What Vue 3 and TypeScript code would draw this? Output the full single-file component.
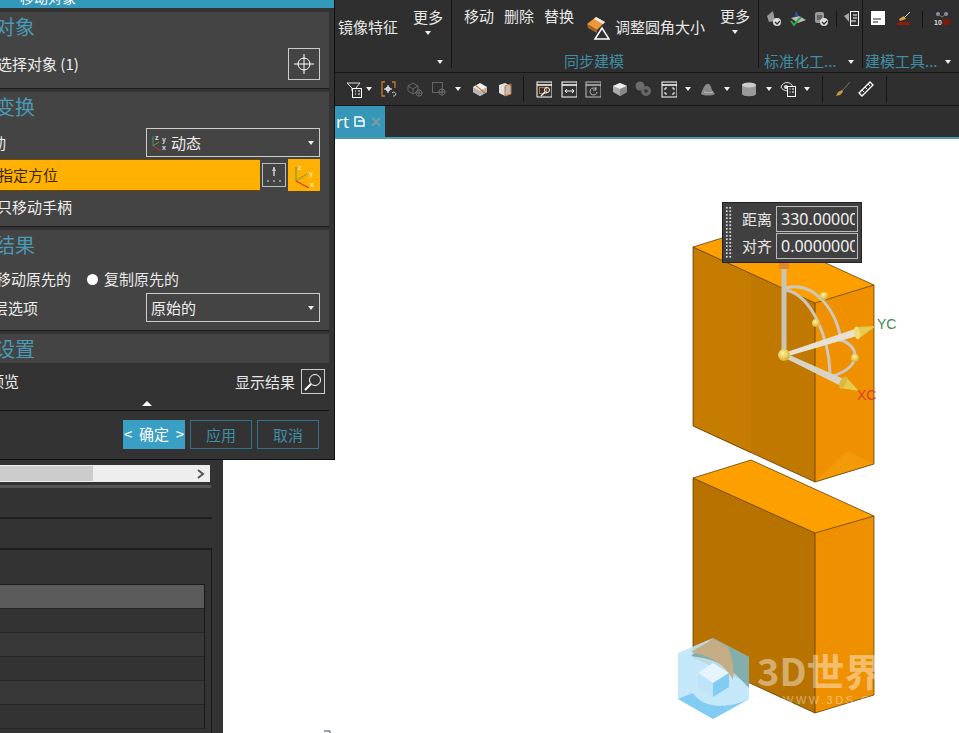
<script setup lang="ts">
// icon bodies for the 16x16 toolbar slots
const shapes: Record<string, string> = {
  filter: '<path d="M1 2h13l-4 5v3H6V7z" fill="none" stroke="#ddd"/><rect x="6.500" y="7.500" width="9" height="9" fill="#333" stroke="#fff"/><path d="M9 10h1M12 10h2M9 13h1M12 13h2" stroke="#fff"/>',
  bracket: '<path d="M4 1H1v14h3M11 1h3v6" fill="none" stroke="#c87a2a" stroke-width="1.300"/><path d="M7 4v8M3 8h8" stroke="#fff"/><circle cx="7" cy="8" r="2" fill="none" stroke="#fff"/><path d="M11 12a2 2 0 1 1 1 3" fill="none" stroke="#ccc"/>',
  ghostBox: '<path d="M1 5l5-3 5 3v5l-5 3-5-3zM1 5l5 3 5-3M6 8v5" fill="none" stroke="#666"/><circle cx="12" cy="12" r="3" fill="none" stroke="#666"/><path d="M12 8v8M8 12h8" stroke="#666"/>',
  ghostSq: '<rect x="1.500" y="1.500" width="10" height="10" fill="none" stroke="#666"/><circle cx="11" cy="11" r="3" fill="none" stroke="#666"/><path d="M11 7v8M7 11h8" stroke="#666"/>',
  cutBox: '<path d="M8 2l7 4v5l-7 4-7-4V6z" fill="#f2f2f2"/><path d="M1 6l7 4 7-4v5l-7 4-7-4z" fill="#b5b5b5"/><path d="M3 4l10 8" stroke="#c8752a" stroke-width="1.200"/>',
  sideBox: '<path d="M2 4l6-2 6 3v8l-6 2-6-3z" fill="#e0e0e0"/><path d="M8 5v10l6-2V5z" fill="#bbb"/><path d="M8 5l6-2v10l-6 2z" fill="none" stroke="#c8752a"/>',
  winZoom: '<rect x="1" y="1" width="15" height="15" fill="#333" stroke="#fff"/><path d="M1 4h15" stroke="#fff" stroke-width="1.500"/><rect x="3.500" y="6.500" width="7" height="6" fill="none" stroke="#c8752a"/><circle cx="11" cy="9" r="2.500" fill="none" stroke="#fff"/><path d="M9 11l-4 4" stroke="#fff" stroke-width="1.500"/>',
  winFit: '<rect x="1" y="1" width="15" height="15" fill="#333" stroke="#fff"/><path d="M1 4h15" stroke="#fff" stroke-width="1.500"/><path d="M4 10h9M4 10l2-2M4 10l2 2M13 10l-2-2M13 10l-2 2" fill="none" stroke="#fff"/>',
  winRot: '<rect x="1" y="1" width="15" height="15" fill="#333" stroke="#bbb"/><path d="M1 4h15" stroke="#bbb" stroke-width="1.500"/><path d="M11 8a3.500 3.500 0 1 0 1 3M11 6v3h-3" fill="none" stroke="#bbb"/>',
  shade: '<path d="M8 2l7 3v6l-7 4-7-4V5z" fill="#aaa"/><path d="M1 5l7-3 7 3-7 3z" fill="#eee"/><path d="M8 8l7-3v6l-7 4z" fill="#888"/>',
  gears: '<circle cx="5" cy="5" r="4.500" fill="#6c6c6c"/><circle cx="11" cy="10" r="5" fill="#666"/><circle cx="11" cy="10" r="1.800" fill="#333"/>',
  winCorner: '<rect x="1" y="1" width="15" height="15" fill="#333" stroke="#fff"/><path d="M1 4h15" stroke="#fff" stroke-width="1.500"/><path d="M4 9V7h2M11 7h2v2M4 11v2h2M11 13h2v-2" fill="none" stroke="#fff"/>',
  hat: '<path d="M1 13c1-3 3-9 6-10s4 3 5 6l3 4c-4 2-10 2-14 0z" fill="#8a8a8a"/><path d="M4 11c3 1 6 1 9 0" fill="none" stroke="#bbb"/>',
  cylinder: '<path d="M1 4v9c0 3 14 3 14 0V4z" fill="#999"/><ellipse cx="8" cy="4" rx="7" ry="2.500" fill="#ccc"/>',
  eyeList: '<path d="M1 6c2-6 10-6 12 0-2 5-10 5-12 0z" fill="none" stroke="#ddd"/><circle cx="6" cy="6" r="2" fill="#ddd"/><rect x="7.500" y="5.500" width="8" height="10" fill="#333" stroke="#fff"/><path d="M9.500 8h1M12 8h2M9.500 11h1M12 11h2" stroke="#fff"/>',
  broom: '<path d="M15 1L7 10" stroke="#777"/><path d="M7 9l-4 2-2 4 4-1 3-3z" fill="#c79a3c"/>',
  ruler: '<path d="M1 12L12 1l3 3L4 15z" fill="none" stroke="#fff" stroke-width="1.300"/><path d="M4 9l2 2M7 6l2 2M10 3l2 2" stroke="#fff"/>'
}

type ToolItem = { kind: 'icon' | 'caret' | 'sep'; name?: string; gap: number }

// gap = distance in px from the previous item
const toolItems: ToolItem[] = [
  { kind: 'icon', name: 'filter', gap: 11 },
  { kind: 'caret', gap: 4 },
  { kind: 'icon', name: 'bracket', gap: 9 },
  { kind: 'icon', name: 'ghostBox', gap: 10 },
  { kind: 'icon', name: 'ghostSq', gap: 8 },
  { kind: 'caret', gap: 8 },
  { kind: 'icon', name: 'cutBox', gap: 11 },
  { kind: 'icon', name: 'sideBox', gap: 9 },
  { kind: 'sep', gap: 10 },
  { kind: 'icon', name: 'winZoom', gap: 12 },
  { kind: 'icon', name: 'winFit', gap: 9 },
  { kind: 'icon', name: 'winRot', gap: 8 },
  { kind: 'icon', name: 'shade', gap: 11 },
  { kind: 'icon', name: 'gears', gap: 7 },
  { kind: 'icon', name: 'winCorner', gap: 10 },
  { kind: 'caret', gap: 8 },
  { kind: 'icon', name: 'hat', gap: 9 },
  { kind: 'caret', gap: 8 },
  { kind: 'icon', name: 'cylinder', gap: 11 },
  { kind: 'caret', gap: 9 },
  { kind: 'icon', name: 'eyeList', gap: 8 },
  { kind: 'caret', gap: 8 },
  { kind: 'sep', gap: 12 },
  { kind: 'icon', name: 'broom', gap: 12 },
  { kind: 'icon', name: 'ruler', gap: 7 },
  { kind: 'sep', gap: 12 }
]

const tableRows = [0, 1, 2, 3, 4]
</script>

<template>
  <div class="page">
    <!-- 功能区 -->
    <header class="ribbon">
      <section class="group g-mirror">
        <span class="cmd mirror">镜像特征</span>
        <div class="more"><span>更多</span><i class="caret"></i></div>
        <i class="caret group-caret"></i>
      </section>
      <section class="group g-sync">
        <div class="sync-small">
          <span>移动</span><span>删除</span><span>替换</span>
        </div>
        <svg class="eraser" width="24" height="26" viewBox="0 0 24 26">
          <path d="M1 9l9-7 9 5-8 8z" fill="#f0973a" />
          <path d="M10 2l9 5-2 2-9-5z" fill="#eee" />
          <path d="M1 9l10 6v3L2 13z" fill="#a8652a" />
          <path d="M16 13l7 11H9z" fill="#333" stroke="#fff" stroke-width="1.500" />
        </svg>
        <span class="cmd fillet">调整圆角大小</span>
        <div class="more more-2"><span>更多</span><i class="caret"></i></div>
        <span class="group-label sync-label">同步建模</span>
      </section>
      <section class="group g-std">
        <div class="icon-row">
          <svg width="16" height="17" viewBox="0 0 16 17"><path d="M1 6l6-5 2 10-6 1z" fill="#999" /><circle cx="11" cy="12" r="4" fill="#ddd" /><path d="M9 12l2 2 3-3" fill="none" stroke="#333" stroke-width="1.300" /></svg>
          <svg width="18" height="17" viewBox="0 0 18 17"><path d="M2 8l8-2 7 4-8 3z" fill="#bbb" /><path d="M7 1l3 5-5 1z" fill="#2d4f9e" /><path d="M2 11l3 4 7-8" fill="none" stroke="#2fa84a" stroke-width="2" /></svg>
          <svg width="15" height="17" viewBox="0 0 15 17"><rect x="1" y="2" width="9" height="11" rx="2" fill="#999" /><rect x="3" y="5" width="5" height="5" fill="#666" /><circle cx="10" cy="12" r="4" fill="#ddd" /><path d="M8 12l2 2 3-3" fill="none" stroke="#333" stroke-width="1.300" /></svg>
          <i class="mini-sep"></i>
          <svg width="16" height="17" viewBox="0 0 16 17"><path d="M0 6l5-3v9z" fill="#aaa" /><rect x="6.500" y="1.500" width="8" height="14" fill="#333" stroke="#fff" /><path d="M9 5h4M9 8h4M7 11h5" stroke="#fff" /></svg>
        </div>
        <span class="group-label std-label">标准化工...</span>
        <i class="caret group-caret"></i>
      </section>
      <section class="group g-tools">
        <div class="icon-row tools-row">
          <svg width="14" height="14" viewBox="0 0 14 14"><rect width="14" height="14" fill="#fff" /><path d="M2 8h8M2 11h5" stroke="#222" /></svg>
          <svg width="15" height="15" viewBox="0 0 15 15"><path d="M14 1L8 7" stroke="#ddd" /><path d="M8 5L3 8l1 2 6-2z" fill="#d9a441" /><path d="M1 11h13v3H1z" fill="#8c1d12" /></svg>
          <i class="mini-sep"></i>
          <svg width="16" height="15" viewBox="0 0 16 15"><circle cx="4" cy="3" r="2" fill="#8a93a8" /><circle cx="12" cy="3" r="2" fill="#8a93a8" /><path d="M4 3l4 3 4-3" stroke="#777" fill="none" /><rect x="9" y="8" width="7" height="6" fill="#7a1a12" /><text x="0" y="14" class="ten">10</text></svg>
        </div>
        <span class="group-label tools-label">建模工具...</span>
        <i class="caret group-caret"></i>
      </section>
    </header>

    <!-- 工具条 -->
    <nav class="toolbar">
      <template v-for="(item, i) in toolItems" :key="i">
        <svg
          v-if="item.kind === 'icon'"
          class="tool"
          :style="{ marginLeft: item.gap + 'px' }"
          width="16"
          height="17"
          viewBox="0 0 16 17"
          v-html="shapes[item.name as string]"
        ></svg>
        <i v-else-if="item.kind === 'caret'" class="caret" :style="{ marginLeft: item.gap + 'px' }"></i>
        <i v-else class="tool-sep" :style="{ marginLeft: item.gap + 'px' }"></i>
      </template>
    </nav>

    <!-- 标签页 -->
    <div class="tab-row">
      <div class="tab">
        <span class="tab-name">rt</span>
        <svg width="11" height="11" viewBox="0 0 11 11"><path d="M1 1h6l3 3v6H1z" fill="none" stroke="#fff" stroke-width="1.500" /><path d="M4 5h6" stroke="#fff" stroke-width="1.500" /></svg>
        <span class="tab-close">×</span>
      </div>
    </div>

    <main class="workspace">
      <!-- 左侧导航 -->
      <aside class="sidebar">
        <div class="hscroll">
          <div class="hscroll-thumb"></div>
          <svg width="8" height="10" viewBox="0 0 8 10"><path d="M1 1l5 4-5 4" fill="none" stroke="#555" stroke-width="2" /></svg>
        </div>
        <div class="side-bar-line"></div>
        <div class="side-line"></div>
        <div class="side-panel">
          <div class="side-table">
            <div class="table-head"></div>
            <div v-for="r in tableRows" :key="r" class="table-row"></div>
          </div>
        </div>
      </aside>

      <!-- 图形窗口 -->
      <div class="canvas">
        <svg class="scene" width="737" height="594" viewBox="222 139 737 594">
          <defs>
            <radialGradient id="ball" cx="0.4" cy="0.35" r="0.7">
              <stop offset="0" stop-color="#fff2a0" />
              <stop offset="1" stop-color="#d3aa2c" />
            </radialGradient>
          </defs>
          <!-- 上方块 -->
          <path d="M692 247L750 229 873 285 814 303z" fill="#fe9f00" />
          <path d="M692 247L814 303V482L692 426z" fill="#c07800" />
          <path d="M692 247L750 274V453L692 426z" fill="#c57c00" />
          <path d="M814 303L873 285V464L814 482z" fill="#ee9000" />
          <path d="M846 451L873 464 814 482z" fill="#f39a08" />
          <path d="M692 247L750 229 873 285 814 303zM692 247V426L814 482 873 464V285M814 303V482" fill="none" stroke="#4a2f00" stroke-width="0.700" />
          <!-- 下方块 -->
          <path d="M692 478L750 460 873 516 814 533z" fill="#fe9f00" />
          <path d="M692 478L814 533V713L692 657z" fill="#b87200" />
          <path d="M814 533L873 516V695L814 713z" fill="#ee9000" />
          <path d="M692 478L750 460 873 516 814 533zM692 478V657L814 713 873 695V516M814 533V713" fill="none" stroke="#4a2f00" stroke-width="0.700" />
          <!-- WCS 手柄 -->
          <g fill="none" stroke="#cdc8ba" stroke-width="3">
            <path d="M785 290C812 296 828 340 829 373" />
            <path d="M785 288C815 280 838 315 840 342" />
            <path d="M840 340C858 346 862 366 832 376" />
          </g>
          <path d="M783 355V268" stroke="#c8c4b8" stroke-width="5" />
          <rect x="778" y="263" width="10" height="6" fill="#e8842a" />
          <path d="M783 353L854 329 856 336 784 357z" fill="#e6e1d4" />
          <path d="M784 353L845 380 840 386 782 357z" fill="#d8d3c5" />
          <path d="M875 326L856 327 857 339z" fill="#e6c94f" />
          <ellipse cx="856" cy="333" rx="3" ry="6.500" transform="rotate(-12 856 333)" fill="#f0dc78" />
          <path d="M858 391L845 377 839 388z" fill="#e6c94f" />
          <ellipse cx="842" cy="382.500" rx="3" ry="6.500" transform="rotate(28 842 382.500)" fill="#d9b93f" />
          <circle cx="783" cy="355" r="6" fill="url(#ball)" />
          <circle cx="823" cy="296" r="4" fill="url(#ball)" />
          <circle cx="815" cy="323" r="4" fill="url(#ball)" />
          <circle cx="854" cy="358" r="4" fill="url(#ball)" />
          <text x="876" y="329" class="axis axis-y">YC</text>
          <text x="856" y="400" class="axis axis-x">XC</text>
          <!-- 水印 -->
          <path d="M712 638L748 657V699L712 719 677 699V653z" fill="#bfe4f9" opacity="0.9" />
          <path d="M712 638L748 657V688C735 675 725 660 690 656z" fill="#6f9f98" opacity="0.75" />
          <path d="M690 652L712 639 727 647C732 660 733 668 732 680 724 664 710 656 690 652z" fill="#c4ad84" />
          <path d="M677 699L692 693C702 710 730 708 748 699L712 719z" fill="#82cbf2" />
          <path d="M712 663L728 673 712 683 697 673z" fill="#e6f5fd" />
          <path d="M697 673L712 683V697L697 687z" fill="#bfe4f9" />
          <path d="M728 673L712 683V697L728 687z" fill="#82cbf2" />
          <text x="756" y="686" class="wm-title">3D世界</text>
          <text x="782" y="704" class="wm-url">WWW.3DS.COM</text>
          <path d="M323 731h6v2" fill="none" stroke="#33447f" />
        </svg>

        <!-- 屏显输入框 -->
        <div class="onscreen">
          <div class="grip"></div>
          <div class="os-rows">
            <div class="os-row"><label>距离</label><input value="330.00000" /></div>
            <div class="os-row"><label>对齐</label><input value="0.0000000" /></div>
          </div>
        </div>
      </div>
    </main>

    <!-- 移动对象对话框 -->
    <div class="dialog">
      <div class="title-bar"><span>移动对象</span></div>

      <section class="sec sec-object">
        <h3>对象</h3>
        <div class="row obj-row">
          <span class="lbl">选择对象 (1)</span>
          <button class="pick">
            <svg width="22" height="22" viewBox="0 0 22 22"><circle cx="11" cy="11" r="6" fill="none" stroke="#fff" /><path d="M11 1v20M1 11h20" stroke="#fff" /></svg>
          </button>
        </div>
      </section>

      <section class="sec sec-trans">
        <h3>变换</h3>
        <div class="row motion-row">
          <span class="lbl lbl-deep">运动</span>
          <div class="select">
            <svg width="16" height="17" viewBox="0 0 16 17"><path d="M2 2v10" stroke="#3f9a5a" /><path d="M2 12l6-4" stroke="#6fa03a" /><path d="M2 12l8 5" stroke="#c0392b" /><text x="4" y="6" class="tiny">z</text><text x="11" y="8" class="tiny">y</text><text x="11" y="16" class="tiny">x</text></svg>
            <span>动态</span>
            <i class="caret select-caret"></i>
          </div>
        </div>
        <div class="orient-row">
          <div class="orient">指定方位</div>
          <button class="dots">
            <svg width="18" height="18" viewBox="0 0 18 18"><path d="M9 1v9" stroke="#ccc" stroke-width="1.500" /><path d="M7 5l2-4 2 4z" fill="#ccc" /><path d="M2 15h2M8 15h2M14 15h2" stroke="#ddd" /></svg>
          </button>
          <button class="csys">
            <svg width="24" height="26" viewBox="0 0 24 26"><path d="M4 5v14" stroke="#6fa03a" stroke-width="1.200" /><path d="M4 19l11-7" stroke="#8fa33a" stroke-width="1.200" /><path d="M4 19l13 7" stroke="#d0392b" stroke-width="1.200" /><text x="6" y="8" class="tiny tiny-w">z</text><text x="17" y="14" class="tiny tiny-w">y</text><text x="18" y="25" class="tiny tiny-w">x</text></svg>
          </button>
        </div>
        <div class="row handle-row"><span class="lbl">只移动手柄</span></div>
      </section>

      <section class="sec sec-result">
        <h3>结果</h3>
        <div class="row radio-row">
          <span class="lbl">移动原先的</span>
          <i class="radio"></i>
          <span>复制原先的</span>
        </div>
        <div class="row layer-row">
          <span class="lbl lbl-layer">图层选项</span>
          <div class="select"><span>原始的</span><i class="caret select-caret"></i></div>
        </div>
      </section>

      <section class="sec sec-set"><h3>设置</h3></section>

      <div class="preview">
        <span class="lbl lbl-preview">预览</span>
        <span class="show">显示结果</span>
        <button class="lens">
          <svg width="20" height="20" viewBox="0 0 20 20"><circle cx="12" cy="8" r="5.500" fill="none" stroke="#fff" /><path d="M8 12l-6 6" stroke="#fff" stroke-width="2" /></svg>
        </button>
        <i class="fold"></i>
      </div>

      <footer class="actions">
        <button class="btn primary"><span>&lt;</span> 确定 <span>&gt;</span></button>
        <button class="btn">应用</button>
        <button class="btn">取消</button>
      </footer>
    </div>
  </div>
</template>

<style>
html, body {
  margin: 0;
  overflow: hidden;
}
</style>

<style scoped>
.page {
  position: relative;
  width: 959px;
  height: 733px;
  overflow: hidden;
  background: #2f2f2f;
  color: #e8e8e8;
  font: 15px/20px "Noto Sans CJK SC", "Noto Sans", sans-serif;
}

i {
  display: block;
}

.caret {
  width: 0;
  height: 0;
  flex: none;
  border-left: 3.5px solid transparent;
  border-right: 3.5px solid transparent;
  border-top: 4px solid #eee;
}

/* ribbon */
.ribbon {
  display: flex;
  height: 72px;
  padding-left: 335px;
  border-bottom: 1px solid #171717;
}

.group {
  position: relative;
  height: 68px;
  border-right: 1px solid #171717;
  flex: none;
}

.g-mirror { width: 116px; }
.g-sync { width: 306px; }
.g-std { width: 103px; }
.g-tools { width: 96px; border-right: 0; }

.cmd {
  position: absolute;
  top: 17px;
}

.mirror { left: 3px; }
.fillet { left: 163px; }

.more {
  position: absolute;
  top: 7px;
  left: 78px;
  display: flex;
  flex-direction: column;
  align-items: center;
  gap: 4px;
}

.more-2 {
  left: 268px;
  top: 6px;
}

.group-caret {
  position: absolute;
  right: 8px;
  top: 60px;
}

.group-label {
  position: absolute;
  top: 51px;
  color: #3f8ea6;
  white-space: nowrap;
}

.sync-label { left: 112px; }
.std-label { left: 5px; }
.tools-label { left: 2px; }

.sync-small {
  position: absolute;
  top: 6px;
  left: 12px;
  display: flex;
  gap: 10px;
}

.eraser {
  position: absolute;
  left: 134px;
  top: 15px;
}

.icon-row {
  position: absolute;
  top: 10px;
  left: 7px;
  display: flex;
  align-items: flex-start;
  gap: 7px;
}

.tools-row {
  left: 8px;
  top: 11px;
  gap: 11px;
}

.mini-sep {
  width: 1px;
  height: 17px;
  background: #171717;
}

.ten {
  font: bold 7px "Liberation Sans", sans-serif;
  fill: #ddd;
}

/* toolbar */
.toolbar {
  display: flex;
  align-items: center;
  height: 32px;
  padding-left: 335px;
  border-bottom: 1px solid #171717;
}

.tool {
  flex: none;
}

.tool-sep {
  width: 1px;
  height: 26px;
  flex: none;
  background: #161616;
}

/* tabs */
.tab-row {
  height: 31px;
  padding-left: 335px;
  border-bottom: 2px solid #4a9cb2;
}

.tab {
  display: flex;
  align-items: center;
  gap: 5px;
  width: 50px;
  height: 31px;
  box-sizing: border-box;
  background: #3596b8;
  color: #fff;
}

.tab-name {
  padding-left: 1px;
  font: 17px "Noto Sans", sans-serif;
}

.tab-close {
  color: #7a9aa6;
  font: bold 19px "Liberation Sans", sans-serif;
}

/* main */
.workspace {
  display: grid;
  grid-template-columns: 223px 1fr;
  height: 594px;
}

.sidebar {
  background: #333;
  padding-top: 326px;
  overflow: hidden;
}

.hscroll {
  position: relative;
  display: flex;
  align-items: center;
  justify-content: flex-end;
  width: 210px;
  height: 17px;
  padding-right: 5px;
  box-sizing: border-box;
  background: #eee;
}

.hscroll-thumb {
  position: absolute;
  left: 0;
  top: 1px;
  width: 93px;
  height: 15px;
  background: #ccc;
}

.side-bar-line {
  width: 211px;
  height: 3px;
  margin-top: 3px;
  background: #555;
}

.side-line {
  width: 212px;
  height: 2px;
  margin-top: 29px;
  background: #1f1f1f;
}

.side-panel {
  width: 212px;
  height: 185px;
  margin-top: 29px;
  padding-top: 34px;
  box-sizing: border-box;
  border-top: 2px solid #1c1c1c;
  border-right: 1px solid #1c1c1c;
}

.side-table {
  width: 204px;
  border-top: 1px solid #1c1c1c;
  border-right: 1px solid #1c1c1c;
}

.table-head {
  height: 23px;
  background: #5a5a5a;
  border-bottom: 1px solid #262626;
}

.table-row {
  height: 23px;
  background: #333;
  border-bottom: 1px solid #262626;
}

.table-row:nth-child(odd) {
  background: #383838;
}

.canvas {
  position: relative;
  background: #fff;
  overflow: hidden;
}

.scene {
  display: block;
}

.axis {
  font: 14px "Liberation Sans", sans-serif;
}

.axis-y { fill: #3c8a4a; }
.axis-x { fill: #d8402a; }

.wm-title {
  font: bold 38px "Noto Sans CJK SC", sans-serif;
  fill: #fff;
  opacity: 0.42;
}

.wm-url {
  font: 11px "Liberation Sans", sans-serif;
  letter-spacing: 2.500px;
  fill: #fff;
  opacity: 0.4;
}

.onscreen {
  position: absolute;
  left: 499px;
  top: 63px;
  display: flex;
  width: 140px;
  height: 61px;
  box-sizing: border-box;
  background: #404040;
  border: 1px solid #222;
}

.grip {
  width: 8px;
  margin: 3px 0 3px 2px;
  background-image: radial-gradient(#ddd 1px, transparent 1.300px);
  background-size: 3.500px 3.500px;
}

.os-rows {
  display: flex;
  flex-direction: column;
  gap: 1px;
  margin: 3px 0 0 9px;
}

.os-row {
  display: flex;
  align-items: center;
  gap: 2px;
  height: 26px;
}

.os-row label {
  width: 32px;
}

.os-row input {
  width: 82px;
  height: 26px;
  padding: 0 2px 0 4px;
  box-sizing: border-box;
  background: #404040;
  border: 1px solid #bbb;
  color: #f2f2f2;
  font: 16px "Noto Sans", sans-serif;
  outline: none;
}

/* dialog */
.dialog {
  position: absolute;
  left: -30px;
  top: 0;
  width: 365px;
  height: 460px;
  box-sizing: border-box;
  padding-right: 5px;
  background: #333;
  border-right: 1px solid #111;
  border-bottom: 1px solid #111;
}

.title-bar {
  height: 8px;
  margin-right: -5px;
  margin-bottom: 4px;
  overflow: hidden;
  background: #3399bb;
}

.title-bar span {
  display: block;
  margin: -13px 0 0 50px;
  color: #fff;
  font-size: 14px;
}

.sec {
  margin-bottom: 3px;
  background: #444;
  border-bottom: 1px solid #1c1c1c;
}

.sec h3 {
  height: 30px;
  margin: 0;
  padding-left: 25px;
  color: #4a9ab5;
  font-size: 20px;
  font-weight: 400;
  line-height: 30px;
}

.sec-object { height: 76px; }
.sec-trans { height: 134px; }
.sec-result { height: 100px; }
.sec-set { height: 29px; margin-bottom: 0; border-bottom: 0; }

.row {
  display: flex;
  align-items: center;
  padding-right: 9px;
}

.lbl {
  padding-left: 27px;
  color: #eee;
}

.lbl-deep { padding-left: 6px; }
.lbl-layer { padding-left: 8px; }
.lbl-preview { padding-left: 19px; }

.obj-row {
  justify-content: space-between;
  height: 34px;
  margin-top: 5px;
}

.pick {
  display: flex;
  align-items: center;
  justify-content: center;
  width: 32px;
  height: 32px;
  padding: 0;
  background: #444;
  border: 1px solid #ccc;
}

.motion-row {
  justify-content: space-between;
  margin-top: 6px;
}

.select {
  position: relative;
  display: flex;
  align-items: center;
  gap: 4px;
  width: 174px;
  height: 29px;
  box-sizing: border-box;
  padding-left: 4px;
  background: #444;
  border: 1px solid #ccc;
  color: #eee;
}

.select-caret {
  position: absolute;
  right: 5px;
  top: 12px;
}

.orient-row {
  display: flex;
  align-items: center;
  height: 32px;
  margin-top: 2px;
}

.orient {
  width: 290px;
  height: 32px;
  box-sizing: border-box;
  padding-left: 28px;
  background: #ffb000;
  border: 1px solid #6e4a00;
  border-width: 1px 0;
  color: #33270a;
  line-height: 30px;
}

.dots {
  display: flex;
  align-items: center;
  justify-content: center;
  width: 24px;
  height: 24px;
  margin-left: 2px;
  padding: 0;
  background: #444;
  border: 1px solid #bbb;
}

.csys {
  display: flex;
  align-items: center;
  justify-content: center;
  width: 32px;
  height: 32px;
  margin-left: 2px;
  padding: 0;
  background: #ffb000;
  border: 0;
}

.tiny {
  font: bold 7px "Liberation Sans", sans-serif;
  fill: #ddd;
}

.tiny-w {
  font-size: 7px;
  fill: #ffe9b0;
}

.handle-row {
  height: 32px;
}

.radio-row {
  height: 22px;
  margin-top: 8px;
}

.radio-row .lbl {
  padding-left: 26px;
}

.radio {
  width: 11px;
  height: 11px;
  margin: 0 6px 0 16px;
  border-radius: 50%;
  background: #fff;
}

.layer-row {
  justify-content: space-between;
  margin-top: 3px;
}

.preview {
  position: relative;
  display: flex;
  align-items: center;
  height: 48px;
  box-sizing: border-box;
  padding-bottom: 11px;
  border-bottom: 1px solid #111;
}

.show {
  position: absolute;
  left: 265px;
  top: 9px;
}

.lens {
  position: absolute;
  left: 331px;
  top: 6px;
  display: flex;
  align-items: center;
  justify-content: center;
  width: 24px;
  height: 25px;
  padding: 0;
  background: #333;
  border: 1px solid #ccc;
}

.fold {
  position: absolute;
  left: 172px;
  top: 38px;
  width: 0;
  height: 0;
  border-left: 5px solid transparent;
  border-right: 5px solid transparent;
  border-bottom: 5px solid #fff;
}

.actions {
  display: flex;
  gap: 5px;
  padding: 9px 0 0 153px;
}

.btn {
  width: 62px;
  height: 29px;
  padding: 0;
  background: #333;
  border: 1px solid #2f728a;
  color: #3f8ea6;
  font: inherit;
  line-height: 26px;
}

.primary {
  display: flex;
  justify-content: space-between;
  background: #3a9fc4;
  border-color: #3a9fc4;
  color: #fff;
}
</style>
